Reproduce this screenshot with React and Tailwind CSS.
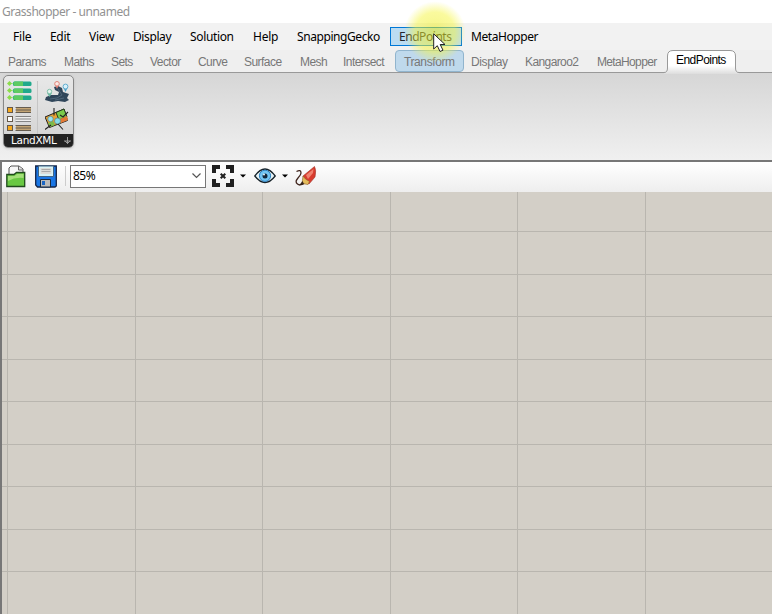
const menus = [
  ["File", "w-[37px]", "tracking-[-0.2px]"],
  ["Edit", "w-[39px]", "tracking-[-0.3px]"],
  ["View", "w-[44px]", "tracking-[-0.3px]"],
  ["Display", "w-[57px]", "tracking-[-0.4px]"],
  ["Solution", "w-[63px]", "tracking-[-0.35px]"],
  ["Help", "w-[44px]", "tracking-[-0.25px]"],
  ["SnappingGecko", "w-[93px]", "tracking-[-0.42px]"],
];

const tabs = [
  ["Params", "w-[56px]"],
  ["Maths", "w-[47px]"],
  ["Sets", "w-[39px]"],
  ["Vector", "w-[48px]"],
  ["Curve", "w-[46px]"],
  ["Surface", "w-[56px]"],
  ["Mesh", "w-[43px]"],
  ["Intersect", "w-[52px]"],
];

const columns = [7, 135, 262, 390, 517, 645];
const rows = [39, 82, 124, 167, 209, 252, 294, 337, 379];

function ListIcon() {
  return (
    <svg width="26" height="22" viewBox="0 0 26 22">
      {[0.5, 7.5, 14.5].map((y) => (
        <g key={y}>
          <path d={`M3 ${y + 2}H8`} stroke="#a5e08f" />
          <path d={`M0 ${y + 2}L2.5 ${y - 0.5}L5 ${y + 2}L2.5 ${y + 4.5}Z`} fill="#8bdc4a" />
          <rect x="6" y={y} width="18.5" height="4.4" rx="1.5" fill="#20a98c" />
          <path d={`M7.5 ${y}H16V${y + 4.4}H7.5L6.2 ${y + 2.2}Z`} fill="#5fcb62" />
        </g>
      ))}
    </svg>
  );
}

function RowsIcon() {
  return (
    <svg width="26" height="26" viewBox="0 0 26 26">
      {[0, 9, 18].map((y, i) => (
        <g key={y}>
          <rect x="0.5" y={y + 0.5} width="5" height="5" fill={i === 1 ? "#fff" : "#f5a81c"} stroke="#65594b" />
          <path d={`M9 ${y + 3}H24`} stroke={i === 1 ? "#eee" : "#c4a575"} strokeWidth="5" />
          <path d={`M8.5 ${y + 0.5}H24M8.5 ${y + 3}H24M8.5 ${y + 5.5}H24`} stroke={i === 1 ? "#858585" : "#655c50"} />
        </g>
      ))}
    </svg>
  );
}

function SurveyIcon() {
  return (
    <svg width="26" height="24" viewBox="0 0 26 24">
      <path d="M1 16L6 14L13 14L14 11L10 9L9 6L13 5L17 7L18 11L24 13L22 17L24 19L20 21L13 20L7 21L0 19Z" fill="#30465a" />
      <path d="M5 18L12 17L17 14L13 8M10 19L19 17" stroke="#50677a" fill="none" />
      <path d="M4.5 16L2 12H7Z" fill="#6cb8a4" />
      <circle cx="4.5" cy="10.5" r="2.2" fill="#e3f4ee" stroke="#7fbfa9" />
      <path d="M12 8L9.7 3H14.3Z" fill="#e58277" />
      <circle cx="12" cy="2.8" r="2.3" fill="#faeae6" stroke="#e28479" />
      <path d="M20.5 11L18 6H23Z" fill="#4da0c8" />
      <circle cx="20.5" cy="5.5" r="2.4" fill="#d8f0fa" stroke="#63afd1" />
    </svg>
  );
}

function MapIcon() {
  return (
    <svg width="26" height="24" viewBox="0 0 26 24">
      <path d="M0 9L19 1L22.5 12.5L4.5 19.5Z" fill="#e8a135" stroke="#222" />
      <path d="M11 4.5L19 1L22 9L14 12Z" fill="#7aca4b" stroke="#263d20" />
      <path d="M3 15L8 13L10 17L5 19Z" fill="#79bb4b" />
      <path d="M15 11L22 8L23 12L16 15Z" fill="#e27936" />
      <circle cx="5.5" cy="11" r="2.7" fill="#9be3ef" stroke="#4c777c" strokeWidth=".6" />
      <circle cx="12.5" cy="13" r="3" fill="#86dbea" stroke="#4c777c" strokeWidth=".6" />
      <path d="M9 0V7.5M13 16L18 21.5M0 21.5L6 17M15 7L18 9L23 4" stroke="#222" strokeWidth="1.1" fill="none" />
    </svg>
  );
}

function FolderIcon() {
  return (
    <svg width="20" height="23" viewBox="0 0 20 23">
      <path d="M3 13V3L5 1H13L17 4V11H3Z" fill="#f7f7f7" stroke="#555" />
      <path d="M12.5 1V5H17" fill="#ddd" stroke="#666" />
      <path d="M.8 9.5L8 9.5L10.5 7.5H18.7V21.5H.8Z" fill="#69c843" stroke="#204a1d" strokeWidth="1.3" />
      <path d="M2 11H8.5L11 9H17.5V13Q9 12 2 16Z" fill="#a4df79" />
    </svg>
  );
}

function SaveIcon() {
  return (
    <svg width="22" height="23" viewBox="0 0 22 23">
      <path d="M.7 1H21.3V21L20 22H2.5L.7 20Z" fill="#1976e5" stroke="#132447" strokeWidth="1.3" />
      <path d="M3.5 1H18.5V11.5H3.5Z" fill="#d8f2f5" stroke="#416485" />
      <path d="M5.5 3H16.5V9H5.5Z" fill="#dcdcd8" />
      <path d="M6.5 4.5H15.5M6.5 6.5H15.5" stroke="#aaa" />
      <path d="M5.5 14.5H15.5V22H5.5Z" fill="#bbb" stroke="#172b42" />
      <path d="M7 16H10V20H7Z" fill="#1b66c4" />
    </svg>
  );
}

function ZoomIcon() {
  return (
    <svg width="22" height="22" viewBox="0 0 22 22" fill="none" stroke="#202020">
      <path d="M2 8V2H8M14 2H20V8M20 14V20H14M8 20H2V14" strokeWidth="4" />
      <path d="M8.7 8.7L13.3 13.3M13.3 8.7L8.7 13.3" strokeWidth="2" />
    </svg>
  );
}

function EyeIcon() {
  return (
    <svg width="22" height="16" viewBox="0 0 22 16">
      <path d="M.8 8Q11-6 21.2 8Q11 21 .8 8Z" fill="#e6f2f6" stroke="#17232a" strokeWidth="1.3" />
      <circle cx="11" cy="7.8" r="5.6" fill="#72c5f3" stroke="#287fc0" />
      <circle cx="11" cy="8" r="2.5" fill="#12263a" />
      <circle cx="10" cy="6.5" r="1" fill="#eaf8ff" />
    </svg>
  );
}

function PencilIcon() {
  return (
    <svg width="22" height="21" viewBox="0 0 22 21">
      <path d="M1.5 5.5Q6 3 6 7Q6 9 3 12Q-.5 16 2.5 18Q5 20 10 17" fill="none" stroke="#40251d" strokeWidth="1.3" />
      <path d="M8 10L19.5 .5Q21.5 4 20 11L14 18Q9 16 8 10Z" fill="#d83b2d" stroke="#9d3428" strokeWidth=".6" />
      <path d="M11 9L18.5 3L18 7L13 13Z" fill="#f0826f" />
      <path d="M8 10L10.5 13L14.5 15.5L13 18.5L7 17.5Z" fill="#e4bc5b" stroke="#8a5c28" strokeWidth=".6" />
      <path d="M7.5 15L9 18L4 19.5Z" fill="#352318" />
    </svg>
  );
}

function DropArrow() {
  return <svg width="6" height="4" viewBox="0 0 6 4"><path d="M0 .5H6L3 3.5Z" fill="#000" /></svg>;
}

export default function App() {
  return (
    <main className="relative flex h-[614px] w-[772px] flex-col overflow-hidden bg-[#eee] font-['Noto_Sans',sans-serif] text-[12px] text-black">
      <header className="h-[23px] bg-white pl-[2px] pt-[3px] leading-[18px] tracking-[-0.46px] text-[#929292]">Grasshopper - unnamed</header>
      <nav className="flex h-[27px] items-center whitespace-nowrap bg-[#f2f2f2] pl-[13px]">
        {menus.map(([name, width, tracking]) => (
          <span key={name} className={`${width} ${tracking} shrink-0`}>{name}</span>
        ))}
        <span className="flex h-[19px] w-[72px] shrink-0 items-center border border-[#0078d7] bg-[#bbdcf2] pl-[8px] tracking-[-0.45px] text-[#24262d]">EndPoints</span>
        <span className="ml-[9px] tracking-[-0.42px]">MetaHopper</span>
      </nav>
      <section className="flex h-[23px] shrink-0 items-end whitespace-nowrap border-b border-[#999] bg-[#efefef] pl-[8px] font-['Liberation_Sans',sans-serif] tracking-[-0.55px] text-[#777]">
        {tabs.map(([name, width]) => (
          <span key={name} className={`${width} shrink-0 leading-[19px]`}>{name}</span>
        ))}
        <span className="h-[22px] w-[69px] shrink-0 rounded-[4px] border border-[#91b4cd] bg-[#bfd9ec] pl-[8px] leading-[22px] tracking-[-0.4px]">Transform</span>
        <span className="ml-[7px] w-[54px] shrink-0 leading-[19px] tracking-[-0.4px]">Display</span>
        <span className="w-[72px] shrink-0 leading-[19px] tracking-[-0.6px]">Kangaroo2</span>
        <span className="w-[67px] shrink-0 leading-[19px] tracking-[-0.65px]">MetaHopper</span>
        <span className="relative mb-[-1px] flex h-[23px] w-[75px] shrink-0 pl-[12px] pt-px leading-[19px] tracking-[-0.55px] text-black">
          <svg className="absolute left-0 top-0" width="75" height="24" viewBox="0 0 75 24">
            <defs><linearGradient id="tab" x2="0" y2="1"><stop stopColor="#fff" /><stop offset=".65" stopColor="#fff" /><stop offset="1" stopColor="#ddd" /></linearGradient></defs>
            <path d="M0 22.5Q3.5 22.5 3.5 18V6Q3.5.5 9 .5H66Q71.5.5 71.5 6V18Q71.5 22.5 75 22.5V24H0Z" fill="url(#tab)" />
            <path d="M0 22.5Q3.5 22.5 3.5 18V6Q3.5.5 9 .5H66Q71.5.5 71.5 6V18Q71.5 22.5 75 22.5" fill="none" stroke="#999" />
          </svg>
          <span className="relative">EndPoints</span>
        </span>
      </section>
      <section className="h-[87px] shrink-0 bg-linear-to-b from-[#d6d6d6] to-[#f0f0f0] pl-[3px] pt-[2px]">
        <div className="flex h-[73px] w-[71px] flex-col overflow-hidden rounded-[5px] border border-[#888] bg-linear-to-b from-[#e8e8e8] to-[#d2d2d2] shadow-sm">
          <div className="flex h-[59px] pl-[3px] pt-[5px]">
            <div className="flex w-[31px] flex-col gap-[4px] border-r border-[#c5c5c5]"><ListIcon /><RowsIcon /></div>
            <div className="flex flex-col gap-[3px] pl-[7px]"><SurveyIcon /><MapIcon /></div>
          </div>
          <div className="flex h-[13px] items-center bg-[#222] pl-[7px] font-['DejaVu_Sans',sans-serif] text-[10.5px] leading-[13px] tracking-[-0.3px] text-white">
            <span className="w-[53px]">LandXML</span>
            <svg width="7" height="8" viewBox="0 0 7 8"><path d="M3.5 0V7M0 4H7M1 4L3.5 6.5L6 4" fill="none" stroke="#999" /></svg>
          </div>
        </div>
      </section>
      <section className="flex h-[454px] flex-col border-l-2 border-t-2 border-[#777]">
        <div className="flex h-[30px] shrink-0 items-center bg-linear-to-b from-white to-[#eee] pb-[2px] pl-[4px]">
          <FolderIcon />
          <span className="ml-[9px]"><SaveIcon /></span>
          <span className="ml-[8px] h-[20px] w-px bg-[#ccc]" />
          <div className="ml-[4px] flex h-[23px] w-[136px] shrink-0 items-center border border-[#777] bg-white pl-[2px] tracking-[-0.5px]">
            <span className="w-[119px] leading-[20px]">85%</span>
            <svg width="9" height="6" viewBox="0 0 9 6"><path d="M.5.5L4.5 4.5L8.5.5" fill="none" stroke="#555" strokeWidth="1.2" /></svg>
          </div>
          <span className="ml-[6px]"><ZoomIcon /></span>
          <span className="ml-[6px] flex"><DropArrow /></span>
          <span className="ml-[8px]"><EyeIcon /></span>
          <span className="ml-[6px] flex"><DropArrow /></span>
          <span className="ml-[7px]"><PencilIcon /></span>
        </div>
        <svg width="770" height="422" viewBox="2 0 770 422" className="bg-[#d3cfc7]">
          {columns.map((x) => <path key={x} d={`M${x + 0.5} 0V422`} stroke="#b9b6af" />)}
          {rows.map((y) => <path key={y} d={`M0 ${y + 0.5}H772`} stroke="#b9b6af" />)}
        </svg>
      </section>
      <span className="absolute left-[404px] top-px h-[62px] w-[62px] rounded-full bg-radial from-[#eded0a80] from-10% via-[#f5f53d80] via-45% to-transparent to-70%" />
      <svg className="absolute left-[433px] top-[33px]" width="13" height="20" viewBox="0 0 13 20">
        <path d="M.7.8V16L4.3 12.7L7 18.5L10 17.2L7.2 11.5H12Z" fill="#fff" stroke="#222" />
      </svg>
    </main>
  );
}
